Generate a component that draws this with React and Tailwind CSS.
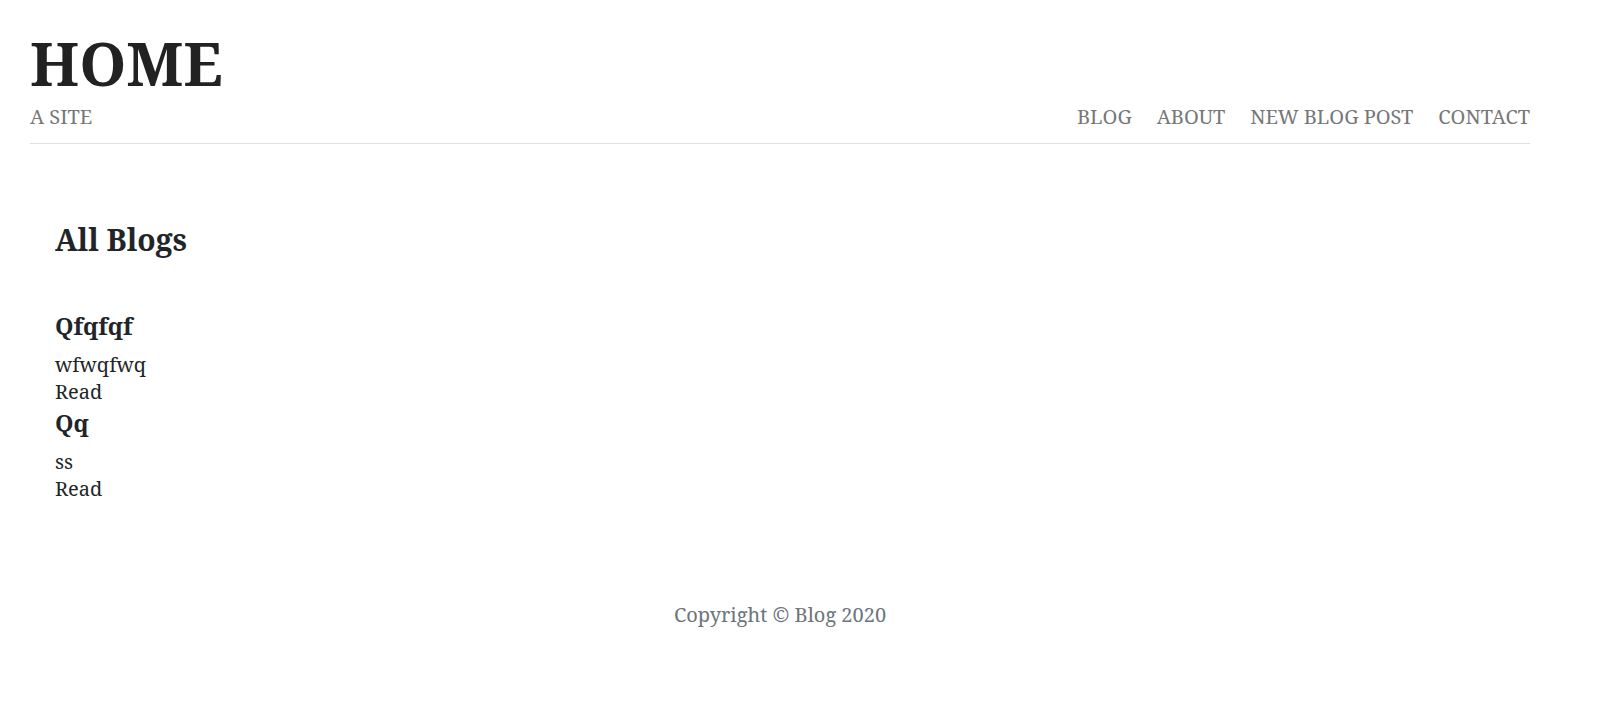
import React from "react";

const blogs = [
  { id: 1, title: "Qfqfqf", body: "wfwqfwq" },
  { id: 2, title: "Qq", body: "ss" },
];

const App = () => {
  return (
    <div className="min-h-screen bg-white font-['Noto_Serif','Droid_Serif','Liberation_Serif',serif]">
      <div className="ml-[30px] w-[1500px]">
        <header className="pt-[27px] border-b border-[#e0e0e0] pb-[12px]">
          <h1 className="text-[60px] leading-[72px] font-bold text-[#222222]">HOME</h1>
          <div className="mt-[4px] flex items-end justify-between text-[20px] leading-[28px] text-[#777777]">
            <span>A SITE</span>
            <nav className="flex gap-[25px]">
              <a href="#">BLOG</a>
              <a href="#">ABOUT</a>
              <a href="#">NEW BLOG POST</a>
              <a href="#">CONTACT</a>
            </nav>
          </div>
        </header>

        <main className="pl-[25px] pt-[76px] text-[#212529]">
          <h2 className="text-[30px] leading-[40px] font-bold">All Blogs</h2>
          <div className="mt-[50px]">
            {blogs.map((blog, i) => (
              <div key={blog.id} className={i > 0 ? "mt-[2px]" : ""}>
                <h3 className="text-[23.5px] leading-[32px] font-bold">{blog.title}</h3>
                <p className="mt-[10px] text-[20px] leading-[26.5px]">{blog.body}</p>
                <a href="#" className="block text-[20px] leading-[26.5px]">Read</a>
              </div>
            ))}
          </div>
        </main>

        <footer className="pt-[99px] text-center text-[20px] leading-[28px] text-[#6c757d]">
          Copyright © Blog 2020
        </footer>
      </div>
    </div>
  );
};

export default App;
